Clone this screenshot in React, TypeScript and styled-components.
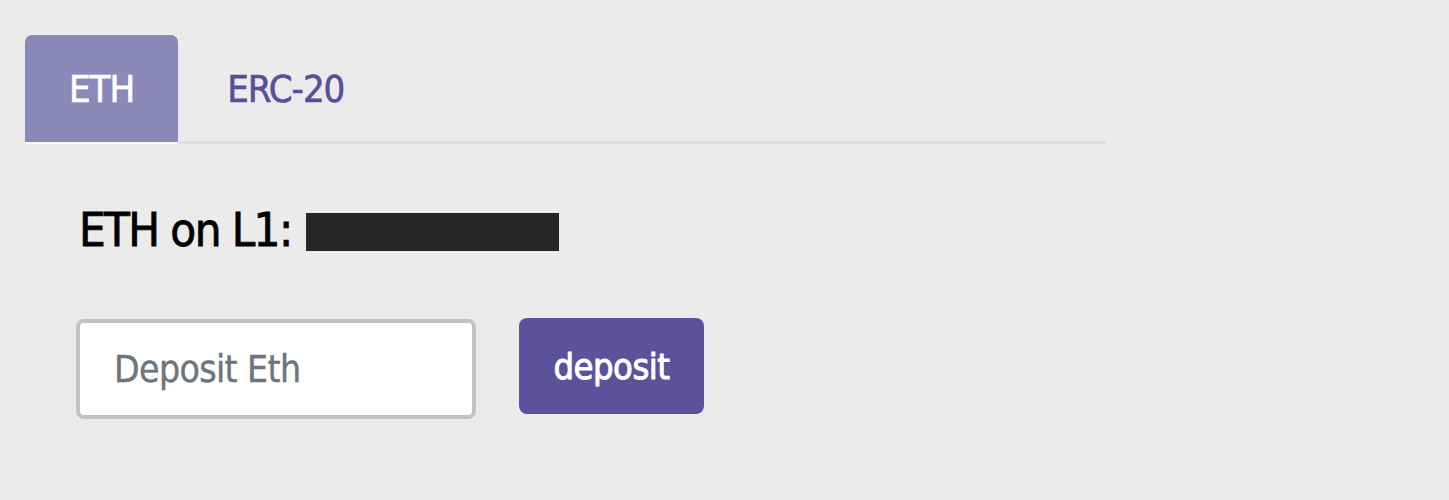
import React, {useState} from 'react';
import styled, {createGlobalStyle} from 'styled-components';

const font = `'DejaVu Sans Condensed', 'Liberation Sans', sans-serif`;

const GlobalStyle = createGlobalStyle`
  html, body {
    margin: 0;
    padding: 0;
    background: #ebebeb;
    font-family: ${font};
  }
`;

const Page = styled.div`
  padding: 35px 0 0 25px;
  width: 1081px;
`;

const TabBar = styled.nav`
  display: flex;
  align-items: stretch;
  border-bottom: 3px solid #dcdde6;
`;

const Tab = styled.button<{active?: boolean}>`
  height: 109px;
  margin-bottom: -3px;
  padding: 0 ${({active}) => (active ? '44px' : '49px')};
  border: none;
  border-bottom: 2px solid ${({active}) => (active ? '#ffffff' : 'transparent')};
  border-radius: 7px 7px 0 0;
  background: ${({active}) => (active ? '#8b89b8' : 'transparent')};
  color: ${({active}) => (active ? '#ffffff' : '#5a4d9c')};
  font-family: ${font};
  font-size: 38px;
  letter-spacing: -1px;
  -webkit-text-stroke: 0.6px currentColor;
  cursor: pointer;
`;

const Content = styled.section`
  padding: 62px 0 0 51px;
  display: flex;
  flex-direction: column;
  gap: 66px;
`;

const BalanceRow = styled.div`
  display: flex;
  align-items: center;
  gap: 14px;
  margin-left: 3px;
  font-size: 47px;
  letter-spacing: -1.6px;
  -webkit-text-stroke: 0.8px currentColor;
  color: #000;
  line-height: 1;
`;

const Redacted = styled.span`
  display: inline-block;
  width: 253px;
  height: 38px;
  margin-top: 4px;
  background: #262626;
`;

const DepositRow = styled.form`
  display: flex;
  align-items: flex-start;
  gap: 43px;
`;

const AmountInput = styled.input`
  box-sizing: border-box;
  width: 400px;
  height: 100px;
  padding: 0 34px;
  border: 4px solid #c2c2c2;
  border-radius: 8px;
  background: #ffffff;
  font-family: ${font};
  font-size: 37px;
  letter-spacing: -0.6px;
  -webkit-text-stroke: 0.4px currentColor;
  color: #6c757d;
  outline: none;

  &::placeholder {
    color: #6c757d;
  }
`;

const DepositButton = styled.button`
  box-sizing: border-box;
  width: 185px;
  height: 96px;
  margin-top: -1px;
  border: none;
  border-radius: 8px;
  background: #5c519b;
  color: #ffffff;
  font-family: ${font};
  font-size: 36px;
  letter-spacing: -0.5px;
  -webkit-text-stroke: 0.9px currentColor;
  cursor: pointer;
`;

const tabs = ['ETH', 'ERC-20'];

export default function App() {
    const [active, setActive] = useState('ETH');
    const [amount, setAmount] = useState('');

    return (
        <>
            <GlobalStyle/>
            <Page>
                <TabBar>
                    {tabs.map((t) => (
                        <Tab key={t} active={active === t} onClick={() => setActive(t)}>
                            {t}
                        </Tab>
                    ))}
                </TabBar>
                <Content>
                    <BalanceRow>
                        ETH on L1: <Redacted/>
                    </BalanceRow>
                    <DepositRow onSubmit={(e) => e.preventDefault()}>
                        <AmountInput
                            placeholder="Deposit Eth"
                            value={amount}
                            onChange={(e) => setAmount(e.target.value)}
                        />
                        <DepositButton type="submit">deposit</DepositButton>
                    </DepositRow>
                </Content>
            </Page>
        </>
    );
}
